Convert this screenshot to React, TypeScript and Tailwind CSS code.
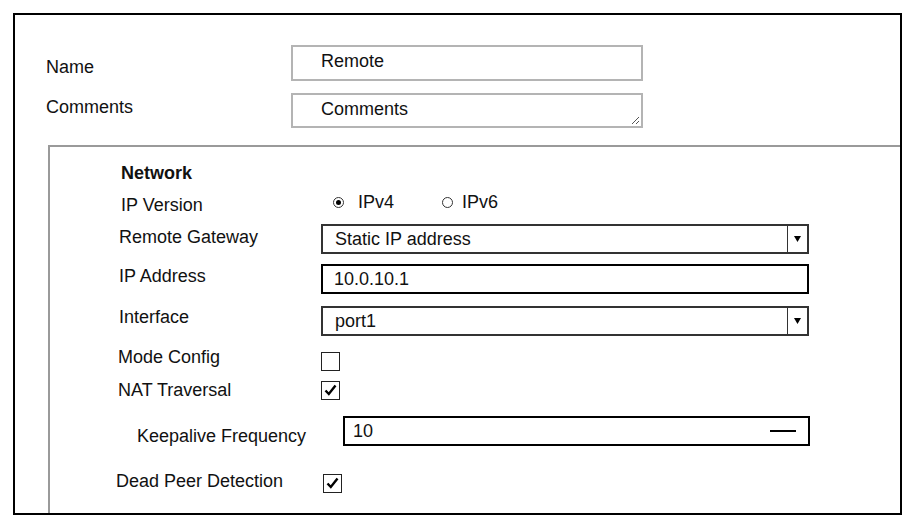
import React from 'react';

/**
 * VPN phase 1 settings form (static screenshot recreation)
 */

const font = "font-['Liberation_Sans',Arial,sans-serif]";

function Checkbox({ checked = false }: { checked?: boolean }) {
  return (
    <div className="w-[19px] h-[19px] border border-[#222] bg-white flex items-center justify-center">
      {checked && (
        <svg width="13" height="12" viewBox="0 0 13 12">
          <path d="M1.5 6.5 L4.8 10 L11.5 1.5" fill="none" stroke="#000" strokeWidth={2.4} />
        </svg>
      )}
    </div>
  );
}

function Radio({ checked = false }: { checked?: boolean }) {
  return (
    <div className="w-[11px] h-[11px] rounded-full border border-[#333] flex items-center justify-center">
      {checked && <div className="w-[5px] h-[5px] rounded-full bg-black" />}
    </div>
  );
}

function Select({ value }: { value: string }) {
  return (
    <div className="w-[488px] h-[30px] border-2 border-[#333] bg-white flex">
      <div className="flex-1 pl-[12px] flex items-center">{value}</div>
      <div className="w-[20px] border-l border-[#333] flex items-center justify-center">
        <svg width="7" height="8" viewBox="0 0 7 8">
          <path d="M0 1 L7 1 L3.5 7 Z" fill="#000" />
        </svg>
      </div>
    </div>
  );
}

export default function App() {
  return (
    <div className={`${font} text-[18px] text-[#111] bg-white w-[913px] h-[521px] overflow-hidden pt-[13px]`}>
      <div className="ml-[13px] w-[889px] h-[502px] border-2 border-black overflow-hidden">
        {/* Name / comments */}
        <div className="pt-[30px] pl-[31px]">
          <div className="flex items-start">
            <div className="w-[245px] pt-[12px] leading-[20px]">Name</div>
            <div className="w-[352px] h-[36px] border-2 border-[#b4b4b4] pl-[28px] pt-[4px] leading-[20px]">
              Remote
            </div>
          </div>
          <div className="flex items-start mt-[12px]">
            <div className="w-[245px] pt-[4px] leading-[20px]">Comments</div>
            <div className="relative w-[352px] h-[35px] border-2 border-[#b4b4b4] pl-[28px] pt-[4px] leading-[20px]">
              Comments
              <svg className="absolute right-[1px] bottom-[1px]" width="9" height="9" viewBox="0 0 9 9">
                <path d="M8 1 L1 8 M8 5 L5 8" stroke="#555" strokeWidth={1} />
              </svg>
            </div>
          </div>
        </div>

        {/* Network panel */}
        <div className="ml-[33px] mt-[17px] h-[400px] border-l-2 border-t-2 border-[#9a9a9a] pl-[71px] pt-[16px] leading-[20px]">
          <div className="font-bold">Network</div>

          <div className="flex items-center mt-[11px] h-[20px]">
            <div className="w-[200px] translate-y-[1px]">IP Version</div>
            <div className="flex items-center -translate-y-[2px] pl-[12px]">
              <Radio checked />
              <span className="ml-[14px]">IPv4</span>
              <div className="ml-[48px]">
                <Radio />
              </div>
              <span className="ml-[9px]">IPv6</span>
            </div>
          </div>

          <div className="flex items-center mt-[10px]">
            <div className="w-[200px] -ml-[2px] -translate-y-[2px]">Remote Gateway</div>
            <div className="ml-[2px]">
              <Select value="Static IP address" />
            </div>
          </div>

          <div className="flex items-center mt-[10px]">
            <div className="w-[200px] -ml-[2px] -translate-y-[3px]">IP Address</div>
            <div className="ml-[2px] w-[488px] h-[30px] border-[2.5px] border-black pl-[11px] flex items-center">
              10.0.10.1
            </div>
          </div>

          <div className="flex items-center mt-[12px]">
            <div className="w-[200px] -ml-[2px] -translate-y-[4px]">Interface</div>
            <div className="ml-[2px]">
              <Select value="port1" />
            </div>
          </div>

          <div className="flex items-center mt-[15px]">
            <div className="w-[200px] -ml-[3px] -translate-y-[4px]">Mode Config</div>
            <div className="ml-[3px]">
              <Checkbox />
            </div>
          </div>

          <div className="flex items-center mt-[9px]">
            <div className="w-[200px] -ml-[3px]">NAT Traversal</div>
            <div className="ml-[3px]">
              <Checkbox checked />
            </div>
          </div>

          <div className="flex items-center mt-[16px]">
            <div className="w-[206px] ml-[16px] translate-y-[5px]">Keepalive Frequency</div>
            <div className="w-[467px] h-[30px] border-[2.5px] border-black pl-[8px] pr-[12px] flex items-center justify-between">
              <span>10</span>
              <div className="w-[26px] h-[2.5px] bg-black" />
            </div>
          </div>

          <div className="flex items-center mt-[27px]">
            <div className="w-[207px] -ml-[5px] -translate-y-[2px]">Dead Peer Detection</div>
            <Checkbox checked />
          </div>
        </div>
      </div>
    </div>
  );
}
